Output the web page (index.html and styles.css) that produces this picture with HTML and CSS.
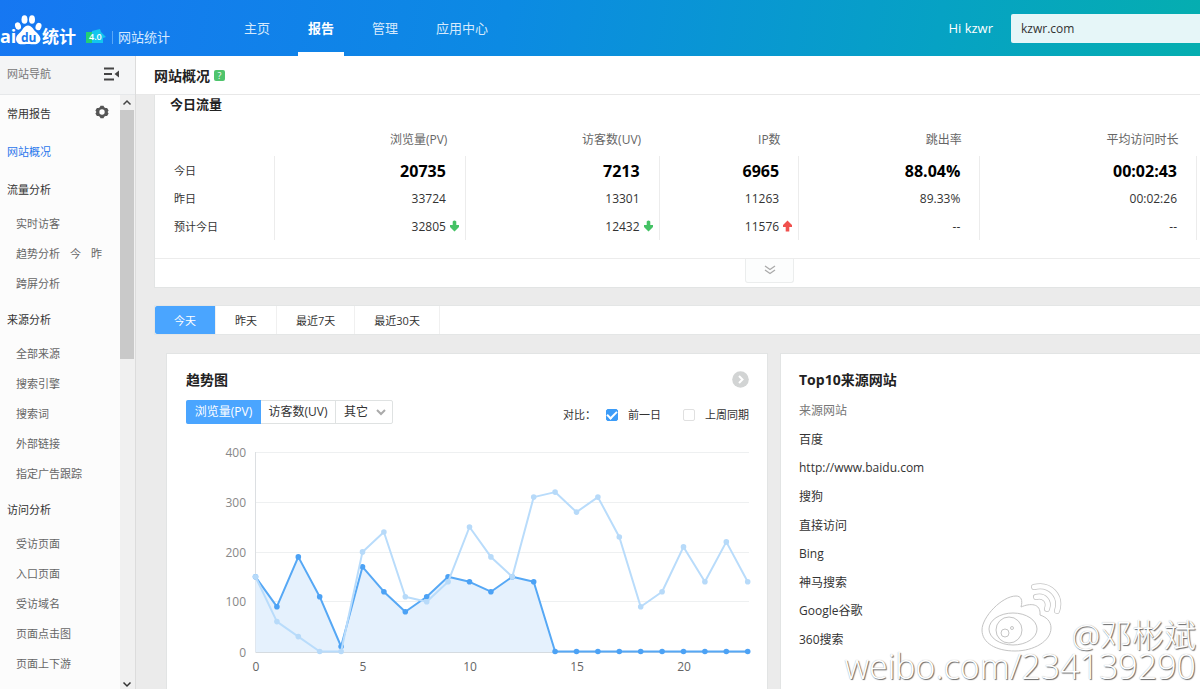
FILE: index.html
```html
<!DOCTYPE html>
<html lang="zh-CN">
<head>
<meta charset="utf-8">
<title>网站概况</title>
<link rel="stylesheet" href="styles.css">
</head>
<body>
<div class="app">
  <header class="topbar">
    <div class="brand">
      <svg class="logo" width="78" height="34" viewBox="0 0 78 34" role="img" aria-label="统计">
        <text class="logo-latin" x="0" y="29">ai</text>
        <g fill="#fff">
          <ellipse cx="18" cy="12" rx="2.900" ry="3.800" transform="rotate(-18 18 12)"/>
          <ellipse cx="24.500" cy="5.500" rx="3" ry="4.300"/>
          <ellipse cx="32" cy="5.500" rx="3" ry="4.300"/>
          <ellipse cx="38.500" cy="12.500" rx="2.900" ry="3.800" transform="rotate(18 38.500 12.500)"/>
          <path d="M28 11.500c-4 0-5 4-7.500 6.500-2.500 2.300-4.500 4-4.500 7 0 3 2.300 5.300 5.500 5.300 2.500 0 4-.3 6.500-.3s4 .3 6.500.3c3 0 6-2.300 6-5.300 0-2.500-2-4.700-4.500-7C33 15.500 32 11.500 28 11.500z"/>
        </g>
        <text class="logo-du" x="21" y="28">du</text>
        <text class="logo-cjk" x="42" y="29">统计</text>
      </svg>
      <svg class="version" width="22" height="16" viewBox="0 0 22 16">
        <path d="M1 4h9v11H1z" fill="#23cf75"/>
        <path d="M7 3l8-2 1 3 5 5-3 1v5H7z" fill="#12c6ee"/>
        <text x="4" y="12">4.0</text>
      </svg>
      <span class="product">网站统计</span>
    </div>
    <nav class="mainnav">
      <a href="#">主页</a>
      <a href="#" class="on">报告</a>
      <a href="#">管理</a>
      <a href="#">应用中心</a>
    </nav>
    <span class="hello">Hi kzwr</span>
    <input class="site" type="text" value="kzwr.com" aria-label="站点">
  </header>

  <div class="body">
    <aside class="sidebar">
      <div class="side-head">
        <span>网站导航</span>
        <svg width="17" height="14" viewBox="0 0 17 14"><path d="M1 1.500h10M1 7h8M1 12.500h10" stroke="#444" stroke-width="1.800"/><path d="M16 3.500v7L11.500 7z" fill="#444"/></svg>
      </div>
      <div class="side-body">
        <nav class="menu">
          <div class="group-title"><a href="#">常用报告</a>
            <svg width="14" height="14" viewBox="0 0 14 14"><path d="M4.800 2.300 5.500.8h3l.7 1.500 1.300.7 1.600-.1 1.500 2.600-1 1.500 1 1.500-1.500 2.600-1.600-.1-1.300.7-.7 1.500h-3l-.7-1.500-1.300-.7-1.600.1L.4 8.500l1-1.500-1-1.500 1.500-2.600 1.600.1z" fill="#555"/><circle cx="7" cy="7" r="2.700" fill="#fcfcfc"/></svg>
          </div>
          <div class="group-title"><a href="#" class="current">网站概况</a></div>
          <div class="group-title"><a href="#">流量分析</a></div>
          <ul>
            <li><a href="#">实时访客</a></li>
            <li><a href="#">趋势分析</a><a href="#">今</a><a href="#">昨</a></li>
            <li><a href="#">跨屏分析</a></li>
          </ul>
          <div class="group-title"><a href="#">来源分析</a></div>
          <ul>
            <li><a href="#">全部来源</a></li>
            <li><a href="#">搜索引擎</a></li>
            <li><a href="#">搜索词</a></li>
            <li><a href="#">外部链接</a></li>
            <li><a href="#">指定广告跟踪</a></li>
          </ul>
          <div class="group-title"><a href="#">访问分析</a></div>
          <ul>
            <li><a href="#">受访页面</a></li>
            <li><a href="#">入口页面</a></li>
            <li><a href="#">受访域名</a></li>
            <li><a href="#">页面点击图</a></li>
            <li><a href="#">页面上下游</a></li>
          </ul>
        </nav>
        <div class="scrollbar">
          <svg width="14" height="15" viewBox="0 0 14 15"><path d="M3.500 9.500 7 6l3.500 3.500" fill="none" stroke="#444" stroke-width="1.500"/></svg>
          <div class="thumb"></div>
          <svg class="down" width="14" height="12" viewBox="0 0 14 12"><path d="M3.500 5.500 7 9l3.500-3.500" fill="none" stroke="#333" stroke-width="1.500"/></svg>
        </div>
      </div>
    </aside>

    <main class="content">
      <div class="page-title"><h1>网站概况</h1><span class="help">?</span></div>

      <section class="card today">
        <h2>今日流量</h2>
        <table>
          <thead>
            <tr><th class="c-name"></th><th class="c-pv">浏览量(PV)</th><th class="c-uv">访客数(UV)</th><th class="c-ip">IP数</th><th class="c-bounce">跳出率</th><th class="c-time">平均访问时长</th></tr>
          </thead>
          <tbody>
            <tr class="big"><th scope="row">今日</th><td>20735</td><td>7213</td><td>6965</td><td>88.04%</td><td>00:02:43</td></tr>
            <tr><th scope="row">昨日</th><td>33724</td><td>13301</td><td>11263</td><td>89.33%</td><td>00:02:26</td></tr>
            <tr><th scope="row">预计今日</th>
              <td>32805<svg class="arrow down" viewBox="0 0 10 12"><path d="M3 1q2-2 4 0v4h3v2L5 12 0 7V5h3z"/></svg></td>
              <td>12432<svg class="arrow down" viewBox="0 0 10 12"><path d="M3 1q2-2 4 0v4h3v2L5 12 0 7V5h3z"/></svg></td>
              <td>11576<svg class="arrow up" viewBox="0 0 10 12"><path d="M3 12h4V7h3V5L5 0 0 5v2h3z"/></svg></td>
              <td>--</td><td>--</td></tr>
          </tbody>
        </table>
        <div class="more">
          <button type="button" aria-label="展开"><svg width="12" height="10" viewBox="0 0 12 10"><path d="M1 1l5 3.500L11 1M1 5l5 3.500L11 5" fill="none" stroke="#aaa" stroke-width="1.300"/></svg></button>
        </div>
      </section>

      <div class="range">
        <button type="button" class="on">今天</button>
        <button type="button">昨天</button>
        <button type="button">最近7天</button>
        <button type="button">最近30天</button>
      </div>

      <div class="panels">
        <section class="card trend">
          <div class="trend-head">
            <h2>趋势图</h2>
            <a href="#" aria-label="更多"><svg width="17" height="17" viewBox="0 0 17 17"><circle cx="8.500" cy="8.500" r="8.300" fill="#d2d4d4"/><path d="M7 5l3.500 3.500L7 12" fill="none" stroke="#fff" stroke-width="2"/></svg></a>
          </div>
          <div class="trend-tools">
            <div class="metric">
              <button type="button" class="on">浏览量(PV)</button>
              <button type="button">访客数(UV)</button>
              <div class="other">
                <select aria-label="指标"><option>其它</option></select>
                <svg width="10" height="7" viewBox="0 0 10 7"><path d="M1 1l4 4 4-4" fill="none" stroke="#aaa" stroke-width="2"/></svg>
              </div>
            </div>
            <div class="compare">
              <span>对比：</span>
              <label><input type="checkbox" checked>前一日</label>
              <label><input type="checkbox">上周同期</label>
            </div>
          </div>
          <svg class="chart" viewBox="0 0 563 249">
            <g stroke="#eef0f1"><path d="M70 12.500h493M70 62.500h493M70 112.500h493M70 161.500h493"/></g>
            <path d="M69.500 12v200" stroke="#dcdfe2"/>
            <path d="M69.500 212.500H563" stroke="#d5dbe0"/>
            <g id="plot"></g>
            <g class="y-axis"><text x="60" y="17">400</text><text x="60" y="67">300</text><text x="60" y="117">200</text><text x="60" y="166">100</text><text x="60" y="217">0</text></g>
            <g class="x-axis"><text x="70" y="231">0</text><text x="177" y="231">5</text><text x="284" y="231">10</text><text x="391" y="231">15</text><text x="498" y="231">20</text></g>
          </svg>
        </section>
        <section class="card sources">
          <h2>Top10来源网站</h2>
          <ul>
            <li class="label">来源网站</li>
            <li>百度</li>
            <li>http://www.baidu.com</li>
            <li>搜狗</li>
            <li>直接访问</li>
            <li>Bing</li>
            <li>神马搜索</li>
            <li>Google谷歌</li>
            <li>360搜索</li>
          </ul>
        </section>
      </div>
    </main>
  </div>

  <div class="watermark">
    <div class="mark-row">
      <svg width="84" height="72" viewBox="0 0 84 72">
        <g fill="#fff" stroke="#c4c4c4" stroke-width="1">
          <path d="M2 47C2 34 22 13 36 13c5 0 7 4 5 11 9-4 20-4 19 8 6 2 11 6 11 13 0 13-17 23-36 23S2 60 2 47z"/>
          <ellipse cx="33" cy="46" rx="24" ry="16"/>
          <circle cx="29" cy="47" r="13"/>
          <circle cx="25" cy="50" r="4"/>
          <circle cx="32" cy="45" r="1.500"/>
        </g>
        <g fill="none" stroke-linecap="round">
          <path d="M54 4c16-4 28 9 23 24" stroke="#c4c4c4" stroke-width="6"/><path d="M54 4c16-4 28 9 23 24" stroke="#fff" stroke-width="4.500"/>
          <path d="M56 14c8-2 14 4 11 12" stroke="#c4c4c4" stroke-width="6"/><path d="M56 14c8-2 14 4 11 12" stroke="#fff" stroke-width="4.500"/>
        </g>
      </svg>
      <span>@邓彬斌</span>
    </div>
    <div class="mark-url">weibo.com/234139290</div>
  </div>
</div>
<script src="chart.js"></script>
</body>
</html>
```
FILE: styles.css
```css
* { box-sizing: border-box; }
body {
  margin: 0;
  font: 12px/18px "Open Sans", "Noto Sans CJK SC", sans-serif;
  color: #333;
  background: #ebebeb;
}
a { color: inherit; text-decoration: none; }
ul { list-style: none; margin: 0; padding: 0; }
h1, h2 { margin: 0; font-size: 14px; line-height: 18px; font-weight: 700; color: #222; }
button, input, select { font: inherit; color: inherit; }
button { cursor: pointer; }

.app { position: relative; display: flex; flex-direction: column; height: 100vh; overflow: hidden; }

/* top bar */
.topbar {
  flex: none;
  display: flex;
  height: 56px;
  background: linear-gradient(100deg, #1677f2 0%, #0c8ae3 42%, #06a2c4 78%, #05aeb0 100%);
  color: #fff;
}
.brand { flex: none; display: flex; width: 234px; padding-top: 14px; }
.logo text { fill: #fff; font-weight: 700; }
.logo-latin { font-size: 18px; }
.logo .logo-du { font-size: 12px; fill: #1679ef; }
.logo-cjk { font-size: 17px; }
.version { margin: 14px 5px 0 7px; }
.version text { font-size: 9px; font-weight: 600; fill: #fff; }
.product {
  height: 13px;
  margin-top: 17px;
  padding-left: 5px;
  border-left: 1px solid #5aa8f7;
  font-size: 13px;
  line-height: 13px;
  color: #d5e9ff;
}
.mainnav { display: flex; gap: 18px; }
.mainnav a { height: 56px; padding: 0 10px; font-size: 13px; line-height: 56px; color: #d5e9fc; }
.mainnav .on { border-bottom: 4px solid #fff; font-weight: 700; color: #fff; }
.hello { margin: 0 18px 0 auto; font-size: 13px; line-height: 56px; }
.site {
  width: 189px;
  height: 29px;
  margin-top: 14px;
  padding: 0 10px;
  border: 0;
  border-radius: 2px 0 0 2px;
  background: #e6f6f8;
  color: #333;
}

.body { flex: 1; display: flex; min-height: 0; }

/* sidebar */
.sidebar { flex: none; display: flex; flex-direction: column; width: 136px; border-right: 1px solid #dcdcdc; background: #f2f2f2; font-size: 11px; }
.side-head {
  display: flex;
  align-items: center;
  justify-content: space-between;
  height: 39px;
  padding: 0 15px 2px 7px;
  border-bottom: 1px solid #e6e8ea;
  background: #f4f5f6;
  color: #777;
}
.side-body { flex: 1; display: flex; min-height: 0; }
.menu { flex: 1; overflow: hidden; background: #fcfcfc; }
.group-title { display: flex; justify-content: space-between; height: 38px; padding: 0 11px 0 7px; line-height: 38px; }
.group-title svg { margin-top: 10px; }
.current { color: #2a77ec; }
.menu ul { padding-bottom: 2px; }
.menu li { display: flex; gap: 10px; height: 30px; padding-left: 16px; line-height: 30px; color: #666; }
.scrollbar { display: flex; flex-direction: column; width: 15px; padding-right: 1px; background: #f0f0f0; }
.thumb { height: 249px; background: #c9c9c9; }
.scrollbar .down { margin-top: auto; }

/* content */
.content { flex: 1; min-width: 0; overflow: hidden; }
.page-title { display: flex; align-items: center; gap: 4px; height: 39px; padding: 1px 0 0 18px; border-bottom: 1px solid #e8e8e8; background: #fff; }
.help { width: 11px; height: 11px; border-radius: 2px; background: #4fc46c; color: #fff; font-size: 9px; line-height: 11px; text-align: center; }
.card { background: #fff; border: 1px solid #e2e4e4; border-right: 0; }

.today { margin-left: 18px; border-top: 0; }
.today h2 { height: 29px; padding-left: 15px; font-size: 13px; }
.today table { width: calc(100% - 3px); border-collapse: collapse; table-layout: fixed; }
.today th { font-size: 12px; font-weight: 400; }
.today thead th { height: 32px; padding: 0 18px 0 0; text-align: right; color: #666; }
.today tbody th { height: 28px; padding: 1px 0 0 19px; text-align: left; font-size: 11px; }
.today td { position: relative; height: 28px; padding: 1px 19px 0 0; text-align: right; font-size: 12px; }
.today tbody th, .today td { border-right: 1px solid #ececec; }
.today .big td { font-size: 16px; font-weight: 700; color: #000; }
.c-name { width: 11.5%; }
.c-pv { width: 18.3%; }
.c-uv { width: 18.6%; }
.c-ip { width: 13.4%; }
.c-bounce { width: 17.4%; }
.c-time { width: 20.8%; }
.arrow { position: absolute; top: 8px; right: 6px; width: 9px; height: 12px; }
.arrow.down { fill: #45c265; }
.arrow.up { fill: #f0504d; }
.more { height: 29px; margin-top: 18px; padding-left: 56.5%; border-top: 1px solid #ececec; }
.more button { display: block; width: 49px; height: 24px; padding: 0; border: 1px solid #ebeded; border-top: 0; border-radius: 0 0 3px 3px; background: #fcfdfd; }

.range { display: flex; height: 30px; margin: 17px 0 18px 18px; border: 1px solid #e4e6e6; border-right: 0; background: #fff; }
.range button { padding: 1px 19px 0; border: 0; border-right: 1px solid #f0f0f0; background: none; font-size: 11px; line-height: 27px; }
.range .on { border-radius: 2px 0 0 2px; background: #4aa5ff; color: #fff; }

.panels { display: grid; grid-template-columns: 602fr 420fr; gap: 12px; padding-left: 30px; }
.trend { min-height: 360px; padding: 17px 18px 0 19px; border-right: 1px solid #e2e4e4; }
.trend-head { display: flex; justify-content: space-between; height: 29px; }
.trend-tools { display: flex; justify-content: space-between; height: 24px; }
.metric { display: flex; border: 1px solid #dfe2e2; border-radius: 2px; }
.metric button { width: 75px; padding: 0; border: 0; border-right: 1px solid #dfe2e2; background: #fff; line-height: 22px; }
.metric .on { margin: -1px 0 -1px -1px; border: 0; border-radius: 2px 0 0 2px; background: #4aa5ff; color: #fff; }
.other { display: flex; align-items: center; width: 56px; padding: 0 6px 0 8px; }
.other select { flex: 1; min-width: 0; padding: 0; border: 0; background: none; appearance: none; }
.compare { display: flex; align-items: center; gap: 22px; padding-top: 6px; font-size: 11px; }
.compare span { margin-right: -12px; }
.compare label { display: flex; align-items: center; gap: 10px; }
.compare input { appearance: none; width: 12px; height: 12px; margin: 0; border: 1px solid #e0e0e0; border-radius: 2px; background: #fff; }
.compare input:checked { display: grid; place-items: center; border-color: #3c9cf8; background: #3c9cf8; }
.compare input:checked::after { content: ""; width: 8px; height: 4px; margin-bottom: 3px; border: solid #fff; border-width: 0 0 2px 2px; transform: rotate(-45deg); }
.chart { display: block; width: 100%; margin-top: 16px; overflow: visible; }
.chart text { font-size: 12px; }
.y-axis { text-anchor: end; fill: #888; }
.x-axis { text-anchor: middle; fill: #666; }
.area { fill: #e4f0fd; fill-opacity: 0.95; }
.line { fill: none; stroke-width: 2; stroke-linejoin: round; }
.s-now .line { stroke: #56a8f5; }
.s-now circle { fill: #4ca2f5; }
.s-prev .line { stroke: #b9dcfb; }
.s-prev circle { fill: #b7daf9; }

.sources { padding: 17px 0 0 18px; }
.sources ul { display: flex; flex-direction: column; height: 257px; margin-top: 8px; }
.sources li { flex: 1; display: flex; align-items: center; }
.sources .label { color: #777; }

/* watermark */
.watermark {
  position: absolute;
  right: 4px;
  bottom: 0;
  color: #fff;
  font-weight: 300;
  text-shadow: 1px 1px 1px #666, 0 0 1px #aaa;
}
.mark-row { display: flex; justify-content: flex-end; align-items: flex-end; gap: 8px; height: 72px; margin-bottom: -12px; font-size: 32px; line-height: 40px; }
.mark-url { font-size: 34px; line-height: 46px; text-align: right; }
```
FILE: chart.js
```js
const NOW = [150, 90, 190, 110, 10, 170, 120, 80, 110, 150, 140, 120, 150, 140, 0, 0, 0, 0, 0, 0, 0, 0, 0, 0];
const PREV = [150, 60, 30, 0, 0, 200, 240, 110, 100, 140, 250, 190, 150, 310, 320, 280, 310, 230, 90, 120, 210, 140, 220, 140];

const px = i => (69.5 + i * 21.4).toFixed(1);
const py = v => (211.5 - v * 0.498).toFixed(1);

function series(data, name, filled) {
  const pts = data.map((v, i) => px(i) + "," + py(v)).join(" ");
  const area = filled ? `<polygon class="area" points="${px(0)},212 ${pts} ${px(23)},212"/>` : "";
  const dots = data.map((v, i) => `<circle cx="${px(i)}" cy="${py(v)}" r="2.8"/>`).join("");
  return `<g class="${name}">${area}<polyline class="line" points="${pts}"/>${dots}</g>`;
}

document.getElementById("plot").innerHTML = series(NOW, "s-now", true) + series(PREV, "s-prev", false);
```
